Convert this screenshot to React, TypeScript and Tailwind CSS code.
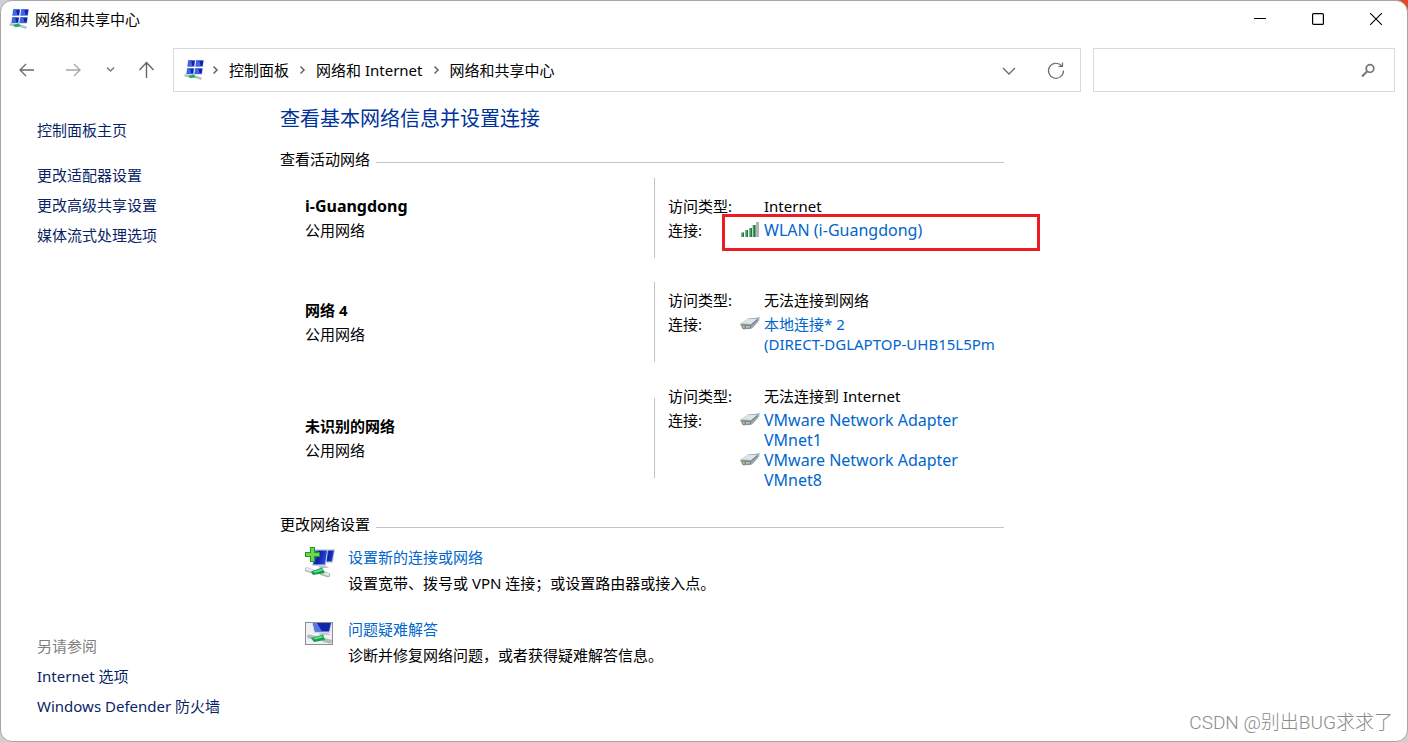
import type { ReactNode } from "react";

type Connection = { kind: "wifi" | "ethernet"; label: string; detail?: string };

interface Network {
  name: string;
  profile: string;
  access: string;
  connections: Connection[];
  highlighted?: boolean;
}

const NETWORKS: Network[] = [
  {
    name: "i-Guangdong",
    profile: "公用网络",
    access: "Internet",
    connections: [{ kind: "wifi", label: "WLAN (i-Guangdong)" }],
    highlighted: true,
  },
  {
    name: "网络 4",
    profile: "公用网络",
    access: "无法连接到网络",
    connections: [{ kind: "ethernet", label: "本地连接* 2", detail: "(DIRECT-DGLAPTOP-UHB15L5Pm" }],
  },
  {
    name: "未识别的网络",
    profile: "公用网络",
    access: "无法连接到 Internet",
    connections: [
      { kind: "ethernet", label: "VMware Network Adapter VMnet1" },
      { kind: "ethernet", label: "VMware Network Adapter VMnet8" },
    ],
  },
];

const TASKS = [
  {
    icon: <NewConnectionIcon />,
    title: "设置新的连接或网络",
    text: "设置宽带、拨号或 VPN 连接；或设置路由器或接入点。",
  },
  {
    icon: <TroubleshootIcon />,
    title: "问题疑难解答",
    text: "诊断并修复网络问题，或者获得疑难解答信息。",
  },
];

// Latin-only names are set one step larger than the Chinese ones
const nameSize = (text: string) => (/^[\x20-\x7e]+$/.test(text) ? "text-base leading-5" : "");

export default function App() {
  return (
    <div className="bg-[#d0d0d0] bg-[linear-gradient(#e2492b,#e2492b)] bg-[length:35px_20px] bg-right-top bg-no-repeat font-['Noto_Sans','Noto_Sans_CJK_SC',sans-serif] text-[15px] leading-5 text-black">
      <div className="relative flex min-h-screen flex-col rounded-xl border border-[#a6a6a6] bg-white">
        <TitleBar />
        <AddressRow />
        <div className="flex flex-1">
          <Sidebar />
          <main className="min-w-0 max-w-[724px] flex-1 pt-[13px]">
            <h1 className="text-xl leading-7 text-[#003399]">查看基本网络信息并设置连接</h1>

            <SectionTitle className="mt-4">查看活动网络</SectionTitle>
            <div className="mt-[9px] flex flex-col gap-6">
              {NETWORKS.map((network) => (
                <NetworkRow key={network.name} network={network} />
              ))}
            </div>

            <SectionTitle className="mt-6">更改网络设置</SectionTitle>
            <ul className="mt-[13px] flex flex-col gap-[26px] pl-[25px]">
              {TASKS.map((task) => (
                <li key={task.title} className="flex gap-[11px]">
                  {task.icon}
                  <div>
                    <a href="#" className="text-[#0066cc]">
                      {task.title}
                    </a>
                    <p className="mt-1.5">{task.text}</p>
                  </div>
                </li>
              ))}
            </ul>
          </main>
        </div>
        <p className="pointer-events-none absolute bottom-1.5 right-3.5 font-['Roboto','Noto_Sans_CJK_SC',sans-serif] text-[19px] font-light leading-6 text-[#8c8c8c]">
          CSDN @别出BUG求求了
        </p>
      </div>
    </div>
  );
}

function TitleBar() {
  return (
    <header className="flex h-9 items-center pl-2 pr-0.5">
      <NetworkCenterIcon />
      <span className="ml-1.5">网络和共享中心</span>
      <div className="ml-auto flex">
        <button type="button" aria-label="最小化" className="grid h-9 w-[58px] place-items-center">
          <svg width="12" height="12" stroke="#000">
            <path d="M0 5.5h12" />
          </svg>
        </button>
        <button type="button" aria-label="最大化" className="grid h-9 w-[58px] place-items-center">
          <svg width="12" height="12" fill="none" stroke="#000" strokeWidth="1.2">
            <rect x=".6" y=".6" width="10.8" height="10.8" rx="1" />
          </svg>
        </button>
        <button type="button" aria-label="关闭" className="grid h-9 w-[58px] place-items-center">
          <svg width="12" height="12" stroke="#000" strokeWidth="1.1">
            <path d="M0 0l12 12M12 0L0 12" />
          </svg>
        </button>
      </div>
    </header>
  );
}

function AddressRow() {
  return (
    <div className="mt-[11px] flex h-11 pr-3">
      <nav aria-label="导航" className="flex w-[172px] shrink-0 items-center pl-4">
        <button type="button" aria-label="后退" className="w-5">
          <svg width="20" height="20" fill="none" stroke="#6a6a6a" strokeWidth="1.3">
            <path d="M17 10H3.5M9 4L3 10l6 6" />
          </svg>
        </button>
        <button type="button" aria-label="前进" className="ml-[26px] w-5">
          <svg width="20" height="20" fill="none" stroke="#a5a5a5" strokeWidth="1.3">
            <path d="M3 10h13.5M11 4l6 6-6 6" />
          </svg>
        </button>
        <button type="button" aria-label="最近浏览的位置" className="ml-[18px] w-5">
          <svg width="20" height="20" fill="none" stroke="#777" strokeWidth="1.4">
            <path d="M6 7.5l3.500 3.500L13 7.500" />
          </svg>
        </button>
        <button type="button" aria-label="上移" className="ml-4 w-5">
          <svg width="20" height="20" fill="none" stroke="#666" strokeWidth="1.4">
            <path d="M9.500 18V3M2.500 10l7-7.500 7 7.500" />
          </svg>
        </button>
      </nav>

      <div className="flex flex-1 items-center border border-[#d9d9d9] pl-2.5">
        <NetworkCenterIcon />
        <Separator className="ml-0.5 mr-[3px]" />
        <a href="#">控制面板</a>
        <Separator className="ml-1 mr-[3px]" />
        <a href="#">网络和 Internet</a>
        <Separator className="ml-1 mr-[3px]" />
        <a href="#">网络和共享中心</a>
        <button type="button" aria-label="以前的位置" className="ml-auto">
          <svg width="20" height="20" fill="none" stroke="#6a6a6a" strokeWidth="1.3">
            <path d="M5 8l6 6 6-6" />
          </svg>
        </button>
        <button type="button" aria-label="刷新" className="ml-7 mr-3.5">
          <svg width="20" height="20" fill="none" stroke="#6a6a6a" strokeWidth="1.2">
            <path d="M17.500 10.500A7.500 7.500 0 1 1 15.800 6M16.500 2.500V6.500H12.500" />
          </svg>
        </button>
      </div>

      <form className="ml-3 flex w-[302px] items-center border border-[#d9d9d9]">
        <input type="search" aria-label="搜索控制面板" className="min-w-0 flex-1 self-stretch px-3 outline-none" />
        <button type="button" aria-label="搜索" className="mr-4">
          <svg width="20" height="20" fill="none" stroke="#777">
            <circle cx="12" cy="8.500" r="3.800" strokeWidth="1.800" />
            <path d="M9 11.500L4 16.500" strokeWidth="2.200" />
          </svg>
        </button>
      </form>
    </div>
  );
}

function Separator({ className }: { className: string }) {
  return (
    <svg width="20" height="20" fill="none" stroke="#666" strokeWidth="1.5" className={`shrink-0 ${className}`}>
      <path d="M7.500 6.500L11 10l-3.500 3.500" />
    </svg>
  );
}

function Sidebar() {
  return (
    <aside className="flex w-[279px] shrink-0 flex-col pb-[25px] pl-9 pt-7 text-[#0b1f66]">
      <a href="#">控制面板主页</a>
      <ul className="mt-[25px] flex flex-col gap-2.5">
        <li><a href="#">更改适配器设置</a></li>
        <li><a href="#">更改高级共享设置</a></li>
        <li><a href="#">媒体流式处理选项</a></li>
      </ul>
      <h2 className="mt-auto text-[#7f7f7f]">另请参阅</h2>
      <ul className="mt-2.5 flex flex-col gap-2.5">
        <li><a href="#">Internet 选项</a></li>
        <li><a href="#">Windows Defender 防火墙</a></li>
      </ul>
    </aside>
  );
}

function SectionTitle({ className, children }: { className: string; children: ReactNode }) {
  return (
    <div className={`flex items-center gap-1.5 ${className}`}>
      <h2>{children}</h2>
      <span className="mt-1.5 h-px flex-1 bg-[#c4c4c4]" />
    </div>
  );
}

function NetworkRow({ network }: { network: Network }) {
  return (
    <section className="flex items-center">
      <div className="flex w-[374px] shrink-0 flex-col gap-1 pl-[25px]">
        <h3 className={`font-bold ${nameSize(network.name)}`}>{network.name}</h3>
        <p>{network.profile}</p>
      </div>
      <div className="h-20 w-px shrink-0 bg-[#c4c4c4]" />
      <dl className="grid min-w-0 flex-1 grid-cols-[72px_1fr] gap-y-1 pl-[13px]">
        <dt>访问类型:</dt>
        <dd className="pl-6">{network.access}</dd>
        <dt>连接:</dt>
        <dd className="relative">
          {network.connections.map((connection) => (
            <a key={connection.label} href="#" className="flex text-[#0066cc]">
              <span className="w-6 shrink-0">
                {connection.kind === "wifi" ? <SignalIcon /> : <EthernetIcon />}
              </span>
              <span className={`min-w-0 overflow-hidden ${nameSize(connection.label)}`}>
                {connection.label}
                {connection.detail && <span className="block whitespace-nowrap">{connection.detail}</span>}
              </span>
            </a>
          ))}
          {network.highlighted && (
            <span className="pointer-events-none absolute -left-[18px] -right-9 -top-1.5 h-[37px] border-3 border-[#ed1c24]" />
          )}
        </dd>
      </dl>
    </section>
  );
}

function Monitor({ x, y, w, h }: { x: number; y: number; w: number; h: number }) {
  return (
    <g transform={`translate(${x} ${y})`}>
      <path d={`M0 0H${w}L${w - 1} ${h}H-1z`} fill="#b4c6ec" />
      <path d={`M.5 .5H${w - 0.6}L${w - 1.4} ${h - 0.7}H-.3z`} fill="#1020b8" />
      <path d={`M.5 .5H${w * 0.4}L${w * 0.6} ${h - 0.7}H-.3z`} fill="#3f68de" />
    </g>
  );
}

function NetworkCenterIcon() {
  return (
    <svg width="20" height="20" viewBox="0 0 20 20" className="shrink-0" aria-hidden="true">
      <Monitor x={4} y={0} w={7.500} h={7} />
      <Monitor x={12} y={0} w={8} h={7} />
      <Monitor x={3} y={8} w={7.500} h={6.500} />
      <Monitor x={11} y={8} w={8} h={6.500} />
      <path d="M1.500 15.500l5 .8M12 17l4.500 1.500" stroke="#b9c3c3" strokeWidth="2.500" strokeLinecap="round" />
      <path d="M4 16l6-1.800 2 3-5.500 1z" fill="#17b45c" />
    </svg>
  );
}

function NewConnectionIcon() {
  return (
    <svg width="32" height="32" viewBox="0 0 32 32" className="shrink-0" aria-hidden="true">
      <defs>
        <linearGradient id="screen" x1="0" x2="1" y1="0" y2=".3">
          <stop offset="0" stopColor="#6c8cee" />
          <stop offset=".45" stopColor="#0b1ca8" />
          <stop offset="1" stopColor="#2a48d4" />
        </linearGradient>
      </defs>
      <path d="M20 2h10l-2 14h-8z" fill="#cdd8ee" />
      <path d="M21 3.500h8l-2 11h-6z" fill="url(#screen)" />
      <path d="M9 2h14l-2 17H7z" fill="#cdd8ee" />
      <path d="M10 3.500h12l-2 14H8z" fill="url(#screen)" />
      <path d="M13 19h8l3 2h-9z" fill="#b9c3cc" />
      <path d="M2 22.500l7 2.500M17 26l6 2" stroke="#a9b4b4" strokeWidth="4.500" strokeLinecap="round" />
      <path d="M2 22l7 2.500M17 25.500l6 2" stroke="#e6ecec" strokeWidth="2.500" strokeLinecap="round" />
      <path d="M6 24.500l11-4 3 5.500-12 2z" fill="#0f9a44" />
      <path d="M8 24.500l9-3 1 2-8 2.500z" fill="#5fd98a" />
      <path d="M5 0h5v5h5v5h-5v5H5v-5H0V5h5z" fill="#239a1e" />
      <path d="M6 1h3v5h5v3H9v5H6V9H1V6h5z" fill="#6cd650" />
    </svg>
  );
}

function TroubleshootIcon() {
  return (
    <svg width="32" height="32" viewBox="0 0 32 32" className="shrink-0" aria-hidden="true">
      <rect x=".5" y="3.500" width="27" height="22" fill="#eff1f3" stroke="#8b8f94" />
      <path d="M7 4h20l-2 10H9z" fill="#ccd7ec" />
      <path d="M8 4h18l-2 8.500H10z" fill="#1024ac" />
      <path d="M8 4h4l5 8.500h-7z" fill="#5878e4" />
      <path d="M14 14h9l3 2H15z" fill="#c2cad2" />
      <path d="M4 17.500l7 1.500M19 21l6 1.500" stroke="#b3bcbc" strokeWidth="4" strokeLinecap="round" />
      <path d="M6 19l12-3.500 2 5.500-11 2z" fill="#12a04a" />
      <path d="M8 19l9-2.500 1 2-8 2z" fill="#5fd98a" />
    </svg>
  );
}

function SignalIcon() {
  return (
    <svg width="20" height="20" viewBox="0 0 20 20" aria-hidden="true">
      <path d="M1 12.500h3V17H1zM5 10h3v7H5zM9 8h3v9H9zM12.500 5h3v12h-3z" fill="#7cb890" />
      <path d="M2.500 12.500H4V17H2.500zM6.500 10H8v7H6.500zM10.500 8H12v9h-1.500zM13.500 5h2v12h-2z" fill="#1f7a40" />
      <path d="M16 2h3v15h-3z" fill="#b4b4b4" />
    </svg>
  );
}

function EthernetIcon() {
  return (
    <svg width="20" height="20" viewBox="0 0 20 20" aria-hidden="true">
      <path d="M15 4l5-1-1 4-4 2z" fill="#8fc4e4" />
      <path d="M0 10l9-6 9 0v4l-6 6.500-9 1z" fill="#98a3ab" />
      <path d="M1 9.500l8-5 8.500.5-6.500 5z" fill="#dfe4e8" />
      <path d="M1 10.500l10 .5v3.500l-8 .5z" fill="#7d8992" />
      <path d="M2.500 11.500l2 .2v2.300h-1z" fill="#d3c24a" />
      <path d="M6 12h3.500v1.800H6z" fill="#b9c6b0" />
      <path d="M11.500 10.500l6-5" stroke="#6c7780" />
    </svg>
  );
}
